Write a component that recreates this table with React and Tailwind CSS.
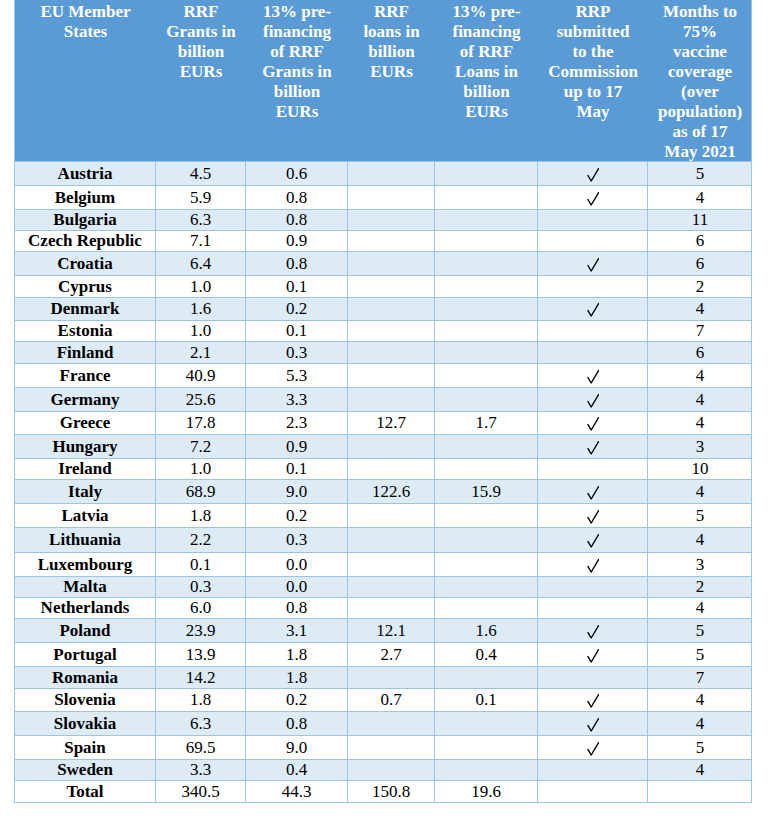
import React from "react";

const cols = "grid grid-cols-[141px_90px_102px_87px_103px_110px_104px]";

const headers = [
  ["EU Member", "States"],
  ["RRF", "Grants in", "billion", "EURs"],
  ["13% pre-", "financing", "of RRF", "Grants in", "billion", "EURs"],
  ["RRF", "loans in", "billion", "EURs"],
  ["13% pre-", "financing", "of RRF", "Loans in", "billion", "EURs"],
  ["RRP", "submitted", "to the", "Commission", "up to 17", "May"],
  ["Months to", "75%", "vaccine", "coverage", "(over", "population)", "as of 17", "May 2021"],
];

// name, grants, pre-grants, loans, pre-loans, rrp, months, row height
const rows = [
  ["Austria", "4.5", "0.6", "", "", true, "5", "h-[24px]"],
  ["Belgium", "5.9", "0.8", "", "", true, "4", "h-[24px]"],
  ["Bulgaria", "6.3", "0.8", "", "", false, "11", "h-[21px]"],
  ["Czech Republic", "7.1", "0.9", "", "", false, "6", "h-[21px]"],
  ["Croatia", "6.4", "0.8", "", "", true, "6", "h-[24px]"],
  ["Cyprus", "1.0", "0.1", "", "", false, "2", "h-[22px]"],
  ["Denmark", "1.6", "0.2", "", "", true, "4", "h-[23px]"],
  ["Estonia", "1.0", "0.1", "", "", false, "7", "h-[21px]"],
  ["Finland", "2.1", "0.3", "", "", false, "6", "h-[22px]"],
  ["France", "40.9", "5.3", "", "", true, "4", "h-[24px]"],
  ["Germany", "25.6", "3.3", "", "", true, "4", "h-[24px]"],
  ["Greece", "17.8", "2.3", "12.7", "1.7", true, "4", "h-[23px]"],
  ["Hungary", "7.2", "0.9", "", "", true, "3", "h-[24px]"],
  ["Ireland", "1.0", "0.1", "", "", false, "10", "h-[21px]"],
  ["Italy", "68.9", "9.0", "122.6", "15.9", true, "4", "h-[24px]"],
  ["Latvia", "1.8", "0.2", "", "", true, "5", "h-[24px]"],
  ["Lithuania", "2.2", "0.3", "", "", true, "4", "h-[25px]"],
  ["Luxembourg", "0.1", "0.0", "", "", true, "3", "h-[24px]"],
  ["Malta", "0.3", "0.0", "", "", false, "2", "h-[21px]"],
  ["Netherlands", "6.0", "0.8", "", "", false, "4", "h-[21px]"],
  ["Poland", "23.9", "3.1", "12.1", "1.6", true, "5", "h-[24px]"],
  ["Portugal", "13.9", "1.8", "2.7", "0.4", true, "5", "h-[24px]"],
  ["Romania", "14.2", "1.8", "", "", false, "7", "h-[22px]"],
  ["Slovenia", "1.8", "0.2", "0.7", "0.1", true, "4", "h-[23px]"],
  ["Slovakia", "6.3", "0.8", "", "", true, "4", "h-[24px]"],
  ["Spain", "69.5", "9.0", "", "", true, "5", "h-[24px]"],
  ["Sweden", "3.3", "0.4", "", "", false, "4", "h-[21px]"],
  ["Total", "340.5", "44.3", "150.8", "19.6", false, "", "h-[21px]"],
];

function Check() {
  return (
    <svg width="12" height="14" viewBox="0 0 12 14" className="mt-[2px]">
      <path
        d="M1 7.6 L4.2 13 L11.6 0.6"
        fill="none"
        stroke="#000"
        strokeWidth="1.4"
        strokeLinecap="round"
        strokeLinejoin="round"
      />
    </svg>
  );
}

function Cell({ children, bold, last }) {
  return (
    <div
      className={
        "flex items-center justify-center border-[#9dc3e6] " +
        (last ? "" : "border-r ") +
        (bold ? "font-bold" : "")
      }
    >
      {children}
    </div>
  );
}

export default function App() {
  return (
    <div
      className="min-h-screen bg-white text-[17px] leading-[20px] text-black"
      style={{ fontFamily: '"Liberation Serif", "Times New Roman", serif' }}
    >
      <div className="ml-[14px] w-[738px] border-x border-b border-[#9dc3e6]">
        <div className={cols + " h-[162px] bg-[#5b9bd5] border-b border-[#9dc3e6]"}>
          {headers.map((lines, i) => (
            <div key={i} className="flex flex-col items-center pt-[2px] font-bold text-white">
              {lines.map((l) => (
                <span key={l} className="whitespace-nowrap">{l}</span>
              ))}
            </div>
          ))}
        </div>
        {rows.map((r, i) => (
          <div
            key={r[0]}
            className={
              cols +
              " " +
              r[7] +
              (i === rows.length - 1 ? "" : " border-b border-[#9dc3e6]") +
              (i % 2 === 0 ? " bg-[#ddebf7]" : " bg-white")
            }
          >
            <Cell bold>{r[0]}</Cell>
            <Cell>{r[1]}</Cell>
            <Cell>{r[2]}</Cell>
            <Cell>{r[3]}</Cell>
            <Cell>{r[4]}</Cell>
            <Cell>{r[5] && <Check />}</Cell>
            <Cell last>{r[6]}</Cell>
          </div>
        ))}
      </div>
    </div>
  );
}
